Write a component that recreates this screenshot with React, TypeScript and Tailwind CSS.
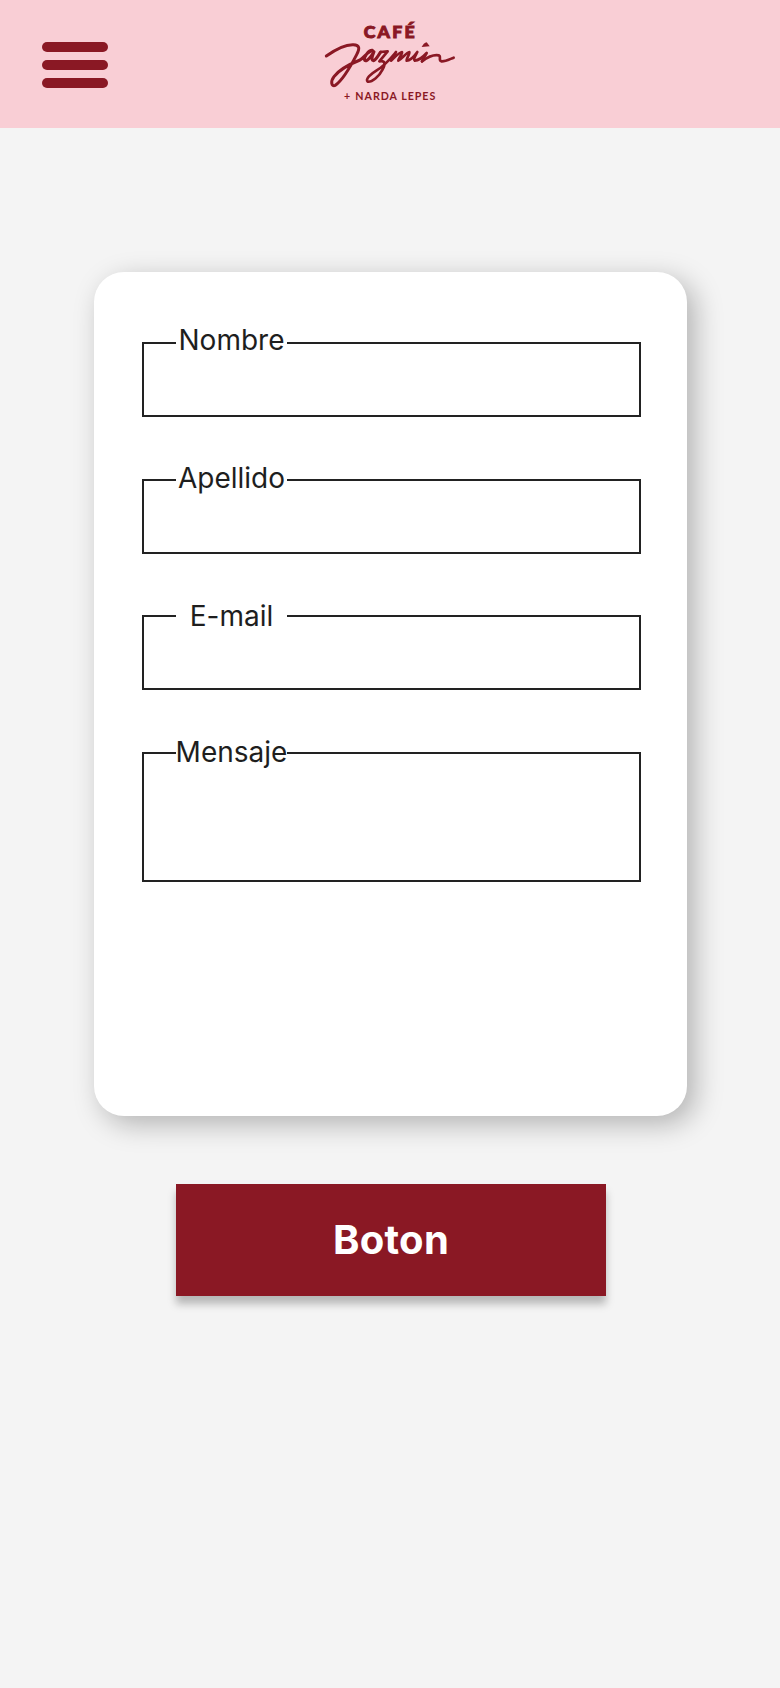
type FieldProps = {
  label: string;
  inputClass: string;
  labelClass: string;
  multiline?: boolean;
};

function Field({ label, inputClass, labelClass, multiline }: FieldProps) {
  const box = "block w-full resize-none rounded-none border-2 border-[#222222] bg-white px-4 text-2xl outline-none";
  return (
    <label className="relative block">
      {multiline ? <textarea className={`${box} ${inputClass}`} /> : <input className={`${box} ${inputClass}`} />}
      <span
        className={`absolute left-[34px] flex h-[34px] w-[111px] items-center justify-center bg-white text-[28px] leading-[34px] whitespace-nowrap text-[#1e1e1e] ${labelClass}`}
      >
        {label}
      </span>
    </label>
  );
}

function Logo() {
  return (
    <svg className="h-[100px] w-[160px]" viewBox="0 0 480 300" fill="none" role="img" aria-label="Café Jazmín">
      <text x="161" y="84" fontSize="53" fontWeight="900" textLength="153" lengthAdjust="spacing" fill="#8a1824" stroke="#8a1824" strokeWidth="3" className="font-['Lato',sans-serif]">
        CAFÉ
      </text>
      <g stroke="#8a1824" strokeLinecap="round" strokeLinejoin="round">
        <path
          strokeWidth="9"
          d="M49 138C74 120 105 103 130 104C149 105 150 115 140 134C124 165 96 212 76 226C64 231 61 215 72 200C90 175 125 160 150 150C164 141 172 126 187 121C176 120 161 140 164 151C170 158 184 138 192 125C186 140 183 150 190 152C198 151 205 135 212 126"
        />
        <path
          strokeWidth="8"
          d="M212 126L233 124L208 154C226 150 227 163 218 178C207 200 186 217 173 215C165 206 184 191 200 181C226 166 243 144 258 126L243 152C256 140 269 126 276 126C279 130 265 145 265 152C276 146 290 127 298 126C301 130 288 147 290 152C300 152 314 137 322 126C316 138 309 149 314 152C325 151 340 140 350 129L336 154"
        />
        <path strokeWidth="8" d="M336 154C352 142 370 133 386 136C395 140 384 151 394 154C407 155 420 147 431 143" />
      </g>
      <path d="M335 111C339 104 344 97 350 97L359 109Z" fill="#8a1824" />
      <g fill="#8a1824" fontSize="32" fontWeight="700" className="font-['Lato',sans-serif]">
        <text x="102" y="271">+</text>
        <text x="136" y="271" textLength="240" lengthAdjust="spacing">
          NARDA LEPES
        </text>
      </g>
    </svg>
  );
}

export default function App() {
  return (
    <div className="flex min-h-[1688px] w-[780px] flex-col bg-[#f4f4f4] font-['Inter',sans-serif]">
      <header className="grid h-32 grid-cols-[1fr_160px_1fr] bg-[#f9ced5]">
        <button aria-label="Menu" className="mt-[42px] ml-[42px] flex h-[46px] w-[66px] flex-col gap-2">
          <span className="h-2.5 w-full rounded-full bg-[#8a1824]" />
          <span className="h-2.5 w-full rounded-full bg-[#8a1824]" />
          <span className="h-2.5 w-full rounded-full bg-[#8a1824]" />
        </button>
        <div className="pt-2.5">
          <Logo />
        </div>
      </header>
      <main className="flex flex-col pt-36">
        <form className="ml-[94px] flex h-[844px] w-[593px] flex-col gap-[61.67px] rounded-[30px] bg-white pt-[70px] pr-[46.5px] pl-12 shadow-[8px_8px_28px_rgba(0,0,0,0.27)]">
          <Field label="Nombre" inputClass="h-[75px]" labelClass="-top-[19px]" />
          <Field label="Apellido" inputClass="h-[75px]" labelClass="-top-[18px]" />
          <Field label="E-mail" inputClass="h-[75px]" labelClass="-top-[16px]" />
          <Field label="Mensaje" inputClass="h-[130px]" labelClass="-top-[17px]" multiline />
        </form>
        <button className="mt-17 ml-44 h-28 w-[430px] bg-[#8a1824] text-[40px] font-bold tracking-[0.3px] text-white shadow-[0_8px_8px_rgba(0,0,0,0.25)]">
          Boton
        </button>
      </main>
    </div>
  );
}
